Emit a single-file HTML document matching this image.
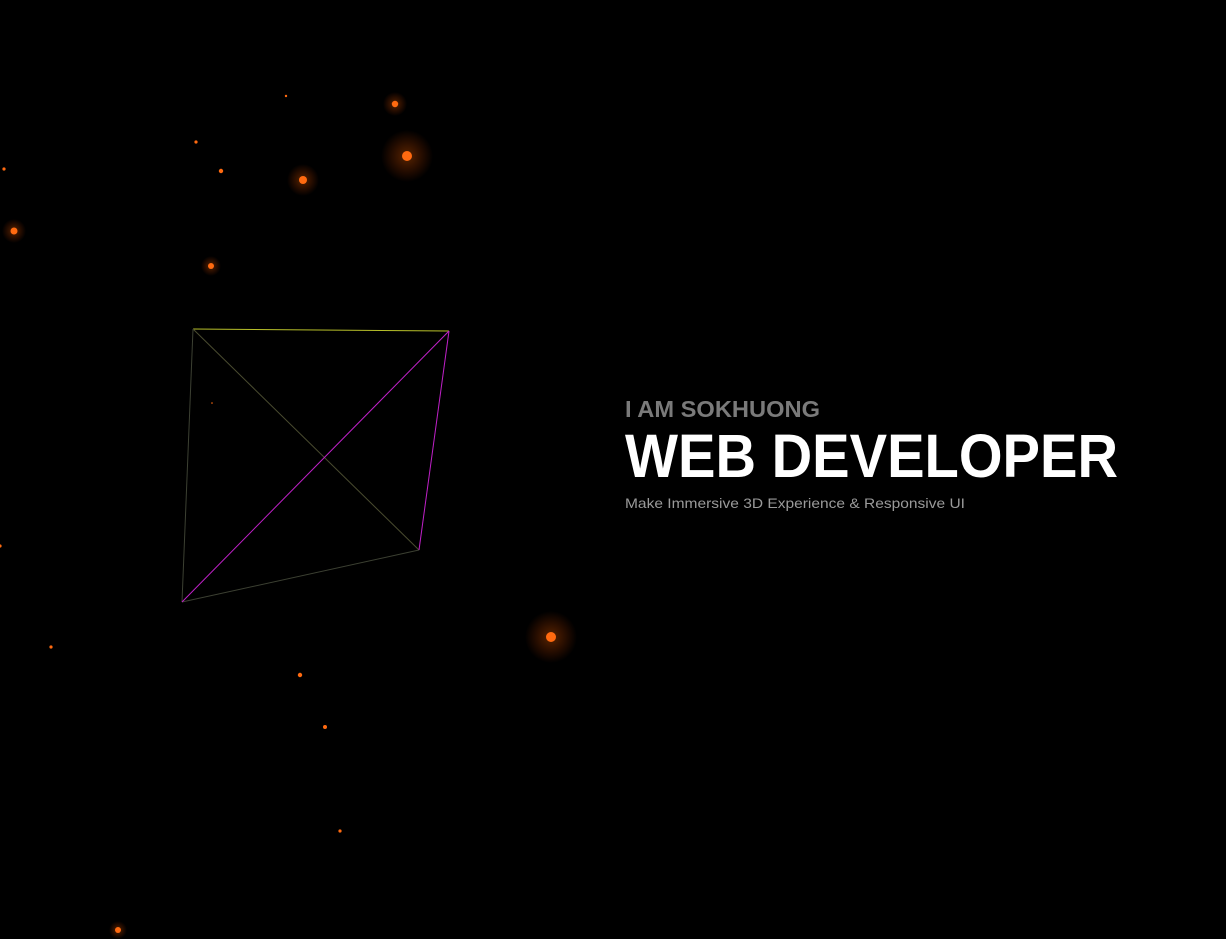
<!DOCTYPE html>
<html><head><meta charset="utf-8"><style>
html,body{margin:0;padding:0;background:#000;width:1226px;height:939px;overflow:hidden}
svg{position:absolute;left:0;top:0}
</style></head><body>
<svg width="1226" height="939" viewBox="0 0 1226 939">
<defs>
<radialGradient id="g"><stop offset="0" stop-color="#ff6a00" stop-opacity="0.35"/><stop offset="1" stop-color="#ff4a00" stop-opacity="0"/></radialGradient>
</defs>
<g>
<circle cx="407" cy="156" r="26" fill="url(#g)"/>
<circle cx="551" cy="637" r="26" fill="url(#g)"/>
<circle cx="303" cy="180" r="16" fill="url(#g)"/>
<circle cx="395" cy="104" r="12" fill="url(#g)"/>
<circle cx="14" cy="231" r="12" fill="url(#g)"/>
<circle cx="211" cy="266" r="10" fill="url(#g)"/>
<circle cx="118" cy="930" r="9" fill="url(#g)"/>
</g>
<g fill="#ff6a10">
<circle cx="407" cy="156" r="5"/>
<circle cx="551" cy="637" r="5"/>
<circle cx="303" cy="180" r="4"/>
<circle cx="395" cy="104" r="3.2"/>
<circle cx="14" cy="231" r="3.5"/>
<circle cx="211" cy="266" r="3"/>
<circle cx="118" cy="930" r="3"/>
<circle cx="221" cy="171" r="2.2"/>
<circle cx="196" cy="142" r="1.6"/>
<circle cx="286" cy="96" r="1.2"/>
<circle cx="4" cy="169" r="1.6"/>
<circle cx="0" cy="546" r="1.6"/>
<circle cx="51" cy="647" r="1.6"/>
<circle cx="300" cy="675" r="2.2"/>
<circle cx="325" cy="727" r="2"/>
<circle cx="340" cy="831" r="1.6"/>
<circle cx="212" cy="403" r="0.8"/>
</g>
<g fill="none" stroke-width="1">
<line x1="193" y1="329" x2="449" y2="331" stroke="#b8c02a"/>
<line x1="193" y1="329" x2="419" y2="550" stroke="#4a4c30"/>
<line x1="193" y1="329" x2="182" y2="602" stroke="#3c4032"/>
<line x1="182" y1="602" x2="419" y2="550" stroke="#3c4032"/>
<line x1="182" y1="602" x2="449" y2="331" stroke="#c020c8"/>
<line x1="449" y1="331" x2="419" y2="550" stroke="#c020c8"/>
</g>
<text x="625" y="417" font-family="Liberation Sans, sans-serif" font-weight="bold" font-size="23" fill="#7a7a7a" textLength="195" lengthAdjust="spacingAndGlyphs">I AM SOKHUONG</text>
<text x="625" y="477" font-family="Liberation Sans, sans-serif" font-weight="bold" font-size="61" fill="#fff" textLength="493" lengthAdjust="spacingAndGlyphs">WEB DEVELOPER</text>
<text x="625" y="508" font-family="Liberation Sans, sans-serif" font-size="14" fill="#9a9a9a" textLength="340" lengthAdjust="spacingAndGlyphs">Make Immersive 3D Experience &amp; Responsive UI</text>
</svg>
</body></html>
